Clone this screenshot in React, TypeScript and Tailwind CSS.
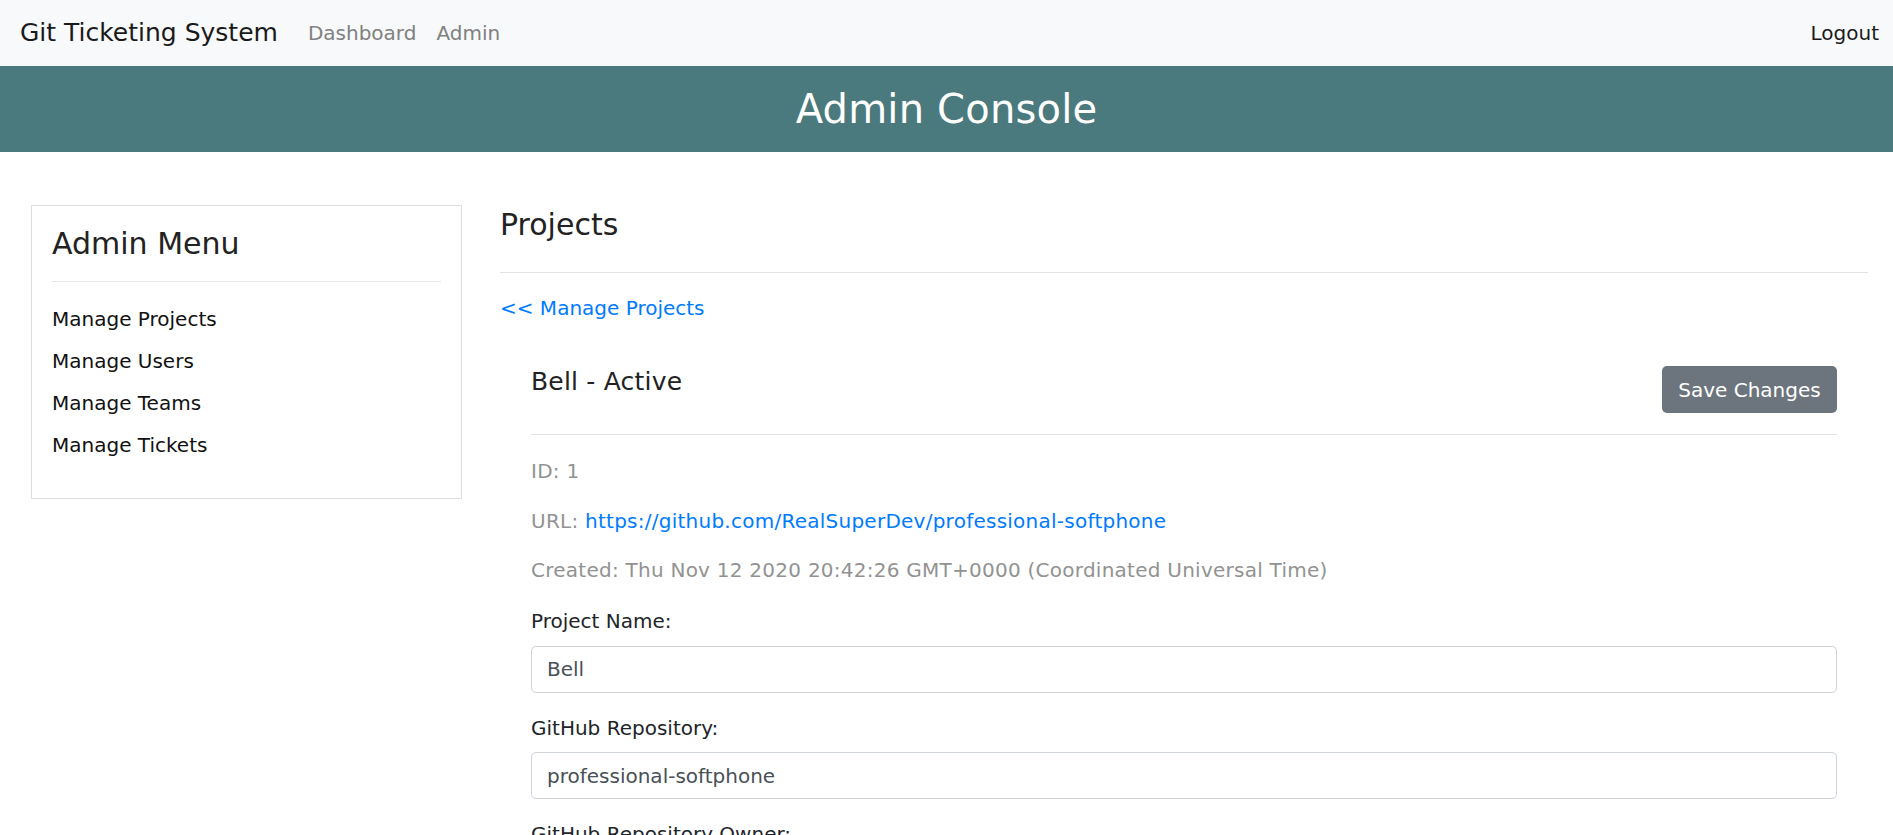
import React from "react";

const font = { fontFamily: '"DejaVu Sans", Verdana, sans-serif' };

function Navbar() {
  return (
    <nav className="flex h-[66px] items-center bg-[#f8f9fa] pl-[20px] pr-[14px]">
      <a className="mr-[20px] text-[25px] leading-[37.5px] text-[#1a1a1a]">Git Ticketing System</a>
      <a className="px-[10px] text-[20px] leading-[30px] text-[#808080]">Dashboard</a>
      <a className="px-[10px] text-[20px] leading-[30px] text-[#808080]">Admin</a>
      <div className="flex-1" />
      <a className="text-[20px] leading-[30px] text-[#1a1a1a]">Logout</a>
    </nav>
  );
}

function Banner() {
  return (
    <div className="flex h-[86px] items-center justify-center bg-[#4a797e]">
      <h2 className="text-[40px] leading-[48px] tracking-[0.2px] text-white">Admin Console</h2>
    </div>
  );
}

function AdminMenu() {
  const items = ["Manage Projects", "Manage Users", "Manage Teams", "Manage Tickets"];
  return (
    <aside className="w-[431px] shrink-0 self-start border border-[#dedede] px-[20px] pt-[20px] pb-[32px]">
      <h4 className="text-[30px] leading-[36px] text-[#222]">Admin Menu</h4>
      <hr className="mt-[19px] border-0 border-t border-[#e6e6e6]" />
      <ul className="mt-[16px]">
        {items.map((t) => (
          <li key={t} className="py-[6px] text-[20px] leading-[30px] text-[#111]">
            {t}
          </li>
        ))}
      </ul>
    </aside>
  );
}

function Field({ label, value, last }: { label: string; value: string; last?: boolean }) {
  return (
    <div className={last ? "" : "mb-[20px]"}>
      <label className="mb-[9.5px] block text-[20px] leading-[30px] text-[#212529]">{label}</label>
      <div className="flex h-[47px] items-center rounded-[5px] border border-[#ced4da] px-[15px] text-[20px] leading-[30px] text-[#495057]">
        {value}
      </div>
    </div>
  );
}

function Content() {
  return (
    <section className="min-w-0 flex-1 pt-[2px]">
      <h4 className="text-[30px] leading-[36px] text-[#222]">Projects</h4>
      <hr className="mt-[29px] border-0 border-t border-[#e3e3e3]" />
      <a className="mt-[20px] block text-[20px] leading-[30px] text-[#007bff]">&lt;&lt; Manage Projects</a>
      <div className="mt-[43px] px-[31px]">
        <div className="flex items-start justify-between">
          <h5 className="pt-[1px] text-[25px] leading-[30px] tracking-[0.2px] text-[#222]">Bell - Active</h5>
          <button className="flex h-[47px] w-[175px] items-center justify-center rounded-[5px] bg-[#6c757d] text-[20px] leading-[30px] text-white">
            Save Changes
          </button>
        </div>
        <hr className="mt-[21px] border-0 border-t border-[#e3e3e3]" />
        <div className="mt-[21px] text-[20px] leading-[30px] tracking-[0.25px] text-[#929292]">
          <p className="mb-[19.5px]">ID: 1</p>
          <p className="mb-[19.5px]">
            URL: <a className="text-[#007bff]">https://github.com/RealSuperDev/professional-softphone</a>
          </p>
          <p className="mb-[21px]">Created: Thu Nov 12 2020 20:42:26 GMT+0000 (Coordinated Universal Time)</p>
        </div>
        <Field label="Project Name:" value="Bell" />
        <Field label="GitHub Repository:" value="professional-softphone" />
        <Field label="GitHub Repository Owner:" value="RealSuperDev" last />
      </div>
    </section>
  );
}

export default function App() {
  return (
    <div className="min-h-screen bg-white" style={font}>
      <Navbar />
      <Banner />
      <main className="flex gap-[38px] pt-[53px] pl-[31px] pr-[25px] pb-[40px]">
        <AdminMenu />
        <Content />
      </main>
    </div>
  );
}
